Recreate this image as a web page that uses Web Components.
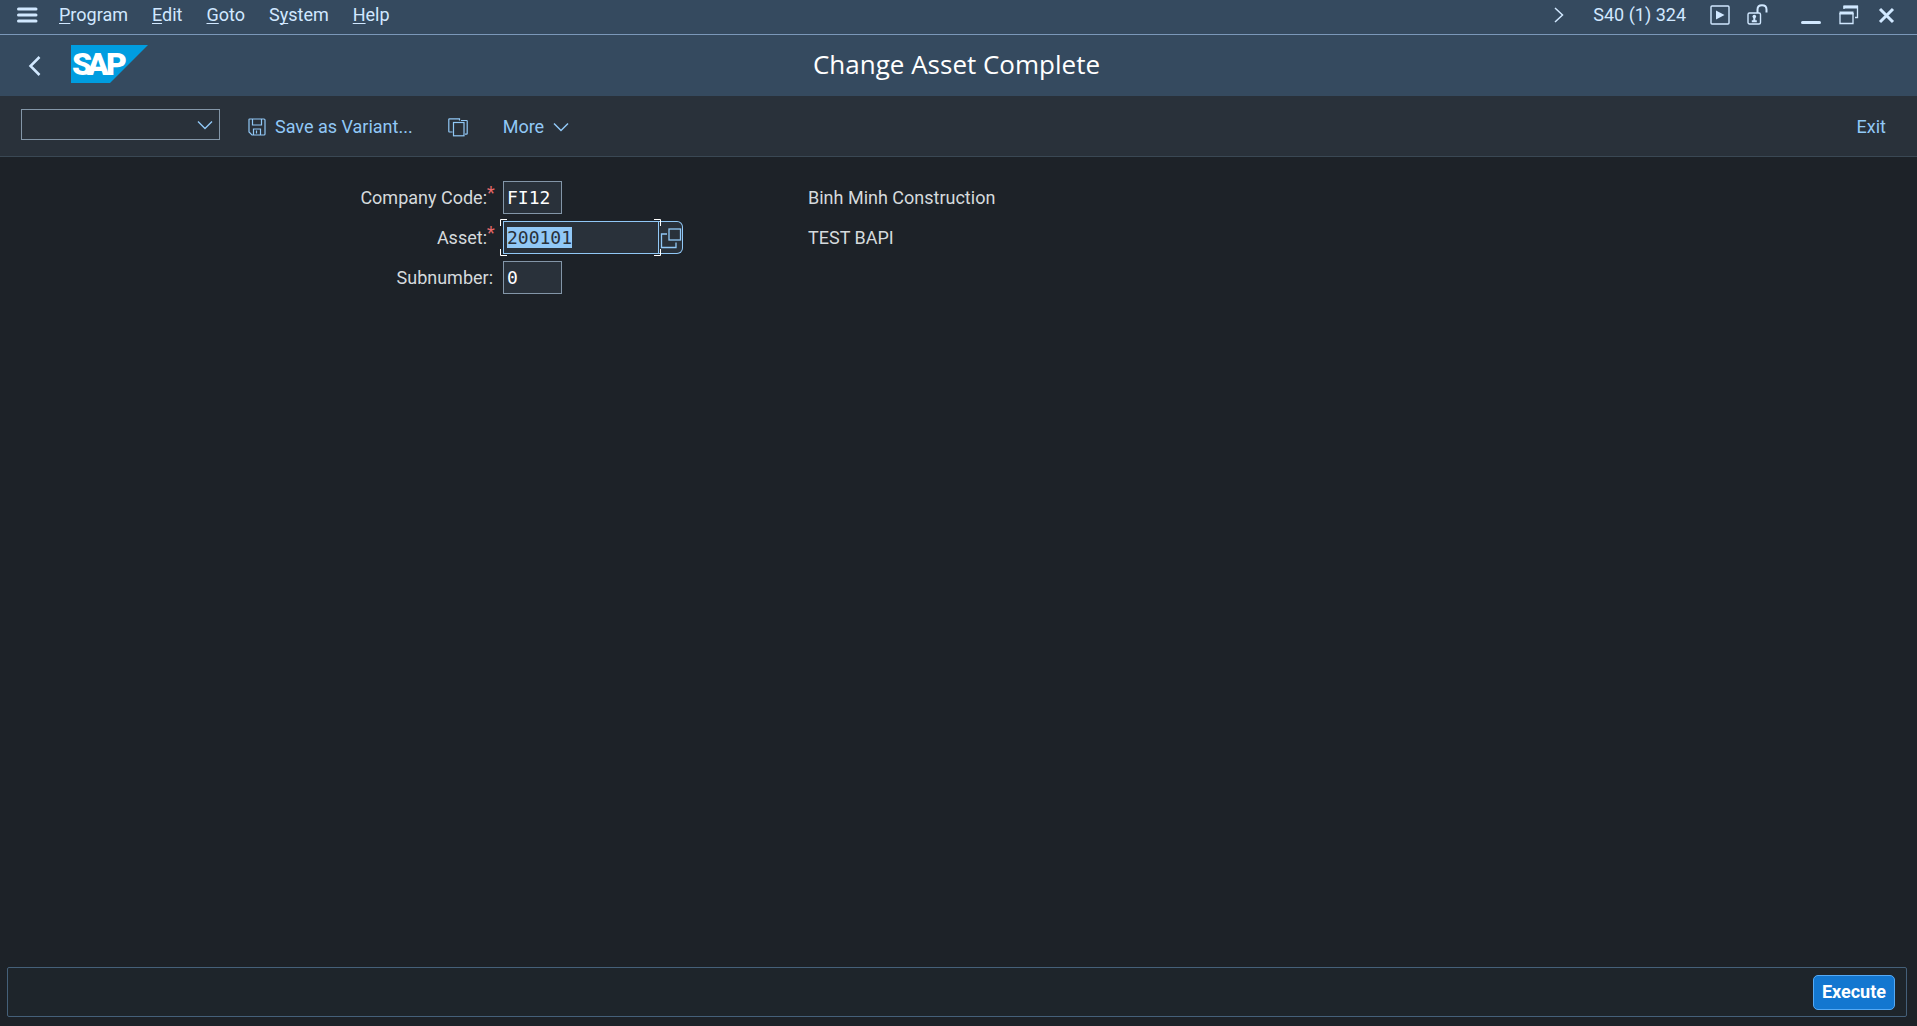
<!DOCTYPE html>
<html lang="en">
<head>
<meta charset="utf-8">
<title>Change Asset Complete</title>
<style>
:root {
  --shell: #354a5f;
  --bar: #29313a;
  --page: #1d2228;
  --shell-text: #d1e8ff;
  --accent: #91c8f6;
  --field-border: #8396a8;
}
html, body { height: 100%; }
body { margin: 0; background: var(--page); font: 18px/24px Roboto, "Liberation Sans", sans-serif; }
</style>
</head>
<body>
<sap-window></sap-window>
<script>
const define = (name, html, init) => {
  const template = document.createElement('template');
  template.innerHTML = '<style>*{box-sizing:border-box}svg{display:block;fill:none;stroke:currentColor}' +
    'button{font:inherit;color:inherit;background:none;border:0;padding:0;margin:0;cursor:pointer}</style>' + html;
  customElements.define(name, class extends HTMLElement {
    constructor() {
      super();
      this.attachShadow({ mode: 'open' }).append(template.content.cloneNode(true));
    }
    connectedCallback() { if (init) init(this, this.shadowRoot); }
  });
};

define('menu-bar', `
<style>
:host { display: flex; align-items: center; height: 35px; padding: 0 22px 4px 16px; background: var(--shell); color: var(--shell-text); border-bottom: 1px solid #7b98b9; }
nav { display: flex; gap: 24px; margin-left: 21px; }
nav button { display: block; }
u { text-decoration-thickness: 1px; text-underline-offset: 2px; text-decoration-skip-ink: none; }
.session { margin: 0 24px 0 29px; }
.status, .window { display: flex; align-items: center; gap: 17px; }
.more { margin-left: auto; }
.window { gap: 18px; margin-left: 33px; }
</style>
<button aria-label="Menu"><svg width="22" height="18" stroke-width="3" stroke-linecap="round"><path d="M2.500 3H20M2.500 9H20M2.500 15H20"/></svg></button>
<nav aria-label="Menu bar">
  <button><u>P</u>rogram</button><button><u>E</u>dit</button><button><u>G</u>oto</button><button>S<u>y</u>stem</button><button><u>H</u>elp</button>
</nav>
<button class="more" aria-label="Show status"><svg width="10" height="16" stroke-width="1.500"><path d="M1 1L8.500 8L1 15"/></svg></button>
<span class="session">S40 (1) 324</span>
<div class="status">
  <button aria-label="Run"><svg width="20" height="20" stroke-width="1.400"><rect x="1" y="1" width="18" height="18" rx="1"/><path d="M6 5.500V14.500L14.500 10Z" fill="currentColor" stroke="none"/></svg></button>
  <button aria-label="Unlocked"><svg width="21" height="22" stroke-width="1.400"><rect x="1" y="9" width="12.500" height="11" rx="1.500"/><path d="M10.500 9V5.500Q10.500 1.200 15 1.200Q19.500 1.200 19.500 5.500V8.500" stroke-width="2"/><circle cx="7.300" cy="12.500" r="1.800" fill="currentColor" stroke="none"/><path d="M7.300 12.500V17.500M4.800 17.300H9.800" stroke-width="2"/></svg></button>
</div>
<div class="window">
  <button aria-label="Minimize"><svg width="20" height="20" stroke-width="3" stroke-linecap="round"><path d="M1.500 17.500H18.500"/></svg></button>
  <button aria-label="Restore"><svg width="20" height="20" stroke-width="1.300"><path d="M5 4V1.500H18.500V12.500H16"/><path d="M4.500 2H19" stroke-width="3"/><path d="M1 8V18.500H14V8"/><path d="M.5 8H14.500" stroke-width="3"/></svg></button>
  <button aria-label="Close"><svg width="18" height="18" stroke-width="3"><path d="M3 3L16 16M16 3L3 16"/></svg></button>
</div>`);

define('title-bar', `
<style>
:host { display: grid; grid-template-columns: 1fr auto 1fr; align-items: center; height: 61px; padding: 0 32px 4px 28px; background: var(--shell); color: #fff; }
.left { display: flex; align-items: center; gap: 30px; }
.back { padding-top: 4px; color: var(--shell-text); }
.logo { stroke: none; }
.logo text { font: 900 32px Roboto, sans-serif; fill: #fff; }
h1 { margin: 0; font: 400 26px/32px "Open Sans", "Noto Sans", sans-serif; }
</style>
<div class="left">
  <button class="back" aria-label="Back"><svg width="13" height="20" stroke-width="2.500"><path d="M11.500 1L2.500 10L11.500 19"/></svg></button>
  <svg class="logo" width="77" height="38" role="img" aria-label="SAP"><path fill="#009de0" d="M0 0H77L39 38H0Z"/><text x="1 16 35" y="30">SAP</text></svg>
</div>
<h1><slot></slot></h1>`);

define('tool-bar', `
<style>
:host { display: flex; align-items: center; height: 61px; padding: 2px 31px 0 21px; background: var(--bar); border-bottom: 1px solid #3a4854; color: var(--accent); }
.command { display: grid; width: 199px; margin: 0 28px 5px 0; align-items: center; }
.command > * { grid-area: 1 / 1; }
select { appearance: none; width: 100%; height: 31px; margin: 0; background: var(--bar); border: 1px solid var(--field-border); border-radius: 0; color: inherit; font: inherit; }
.command svg { justify-self: end; margin-right: 7px; pointer-events: none; }
button { display: flex; align-items: center; gap: 9px; }
.copy { margin: 0 35px; }
.exit { margin-left: auto; }
</style>
<div class="command"><select aria-label="Command"><option></option></select><svg width="16" height="10" stroke-width="1.400"><path d="M1 1.500L8 8.500L15 1.500"/></svg></div>
<button><svg width="18" height="18" stroke-width="1.200"><path d="M1.500 1H16Q17 1 17 2V16Q17 17 16 17H4L1 14V1.500Q1 1 1.500 1Z"/><path d="M4.500 1V7H13.500V1M5.500 17V11H12.500V17M8.500 12.500V15.500"/></svg>Save as Variant...</button>
<button class="copy" aria-label="Copy"><svg width="20" height="19" stroke-width="1.200"><path d="M4.500 14H1.500Q.8 14 .8 13.300V1.500Q.8.8 1.500.8H11.500V2.500M13 2.500H18.500Q19.200 2.500 19.200 3V15.500Q19.200 16.200 18.500 16.200H17"/><rect x="5.500" y="4.500" width="10.500" height="13.300"/></svg></button>
<button>More<svg width="16" height="10" stroke-width="1.500"><path d="M1 1.500L8 8.500L15 1.500"/></svg></button>
<button class="exit">Exit</button>`);

define('form-row', `
<style>
:host { display: grid; grid-template-columns: 493px 295px 1fr; column-gap: 10px; align-items: center; height: 33px; color: #d5dadd; }
label { display: flex; justify-content: flex-end; }
.star { display: none; width: 8px; line-height: 14px; color: #e5696a; }
:host([required]) .star { display: block; }
:host([required]) label { margin-right: -2px; }
.field { display: flex; position: relative; width: fit-content; }
input { width: 59px; height: 33px; margin: 0; padding: 0 3px; background: var(--bar); border: 1px solid var(--field-border); border-radius: 0; outline: 0; color: #fff; font: 18px/20px "DejaVu Sans Mono", monospace; }
input::selection { background: var(--accent); color: #29313a; }
:host([active]) input { width: 156px; border-color: var(--accent); }
.help, .focus { display: none; }
:host([active]) .help { display: grid; place-items: center; width: 24px; height: 33px; color: var(--accent); background: var(--bar); border: 1px solid var(--accent); border-left: 0; border-radius: 0 6px 6px 0; }
:host([active]) .focus { display: block; position: absolute; top: -2px; left: -3px; color: #fff; pointer-events: none; }
</style>
<label for="value"><slot></slot><span class="star">*</span></label>
<div class="field"><input id="value"><button class="help" aria-label="Value help"><svg width="22" height="22" stroke-width="1.300"><rect x="9" y="2" width="11.500" height="11"/><path d="M7 7H1.500V20.500H16V15.500"/></svg></button><svg class="focus" width="161" height="37" stroke-width="1"><path d="M.5 7V.5H7M154 .5H160.500V7M160.500 30V36.500H154M7 36.500H.5V30"/></svg></div>
<slot name="text"></slot>`, (host, root) => {
  const input = root.getElementById('value');
  input.value = host.getAttribute('value');
  if (host.hasAttribute('required')) input.required = true;
  if (host.hasAttribute('active')) { input.focus(); input.select(); }
});

define('footer-bar', `
<style>
:host { display: flex; justify-content: flex-end; align-items: center; height: 50px; margin: 0 10px 9px 7px; padding: 0 11px 0 0; background: #1e252b; border: 1px solid #456079; border-radius: 2px; }
button { height: 35px; padding: 0 8px; background: #1377d0; border: 1px solid #55aaf5; border-radius: 5px; color: #fff; font-weight: 700; }
</style>
<button><slot></slot></button>`);

define('sap-window', `
<style>
:host { display: flex; flex-direction: column; min-height: 100%; }
main { flex: 1; display: flex; flex-direction: column; gap: 7px; padding: 24px 0; }
</style>
<menu-bar></menu-bar>
<title-bar>Change Asset Complete</title-bar>
<tool-bar></tool-bar>
<main>
  <form-row required value="FI12">Company Code:<span slot="text">Binh Minh Construction</span></form-row>
  <form-row required active value="200101">Asset:<span slot="text">TEST BAPI</span></form-row>
  <form-row value="0">Subnumber:</form-row>
</main>
<footer-bar>Execute</footer-bar>`);
</script>
</body>
</html>
